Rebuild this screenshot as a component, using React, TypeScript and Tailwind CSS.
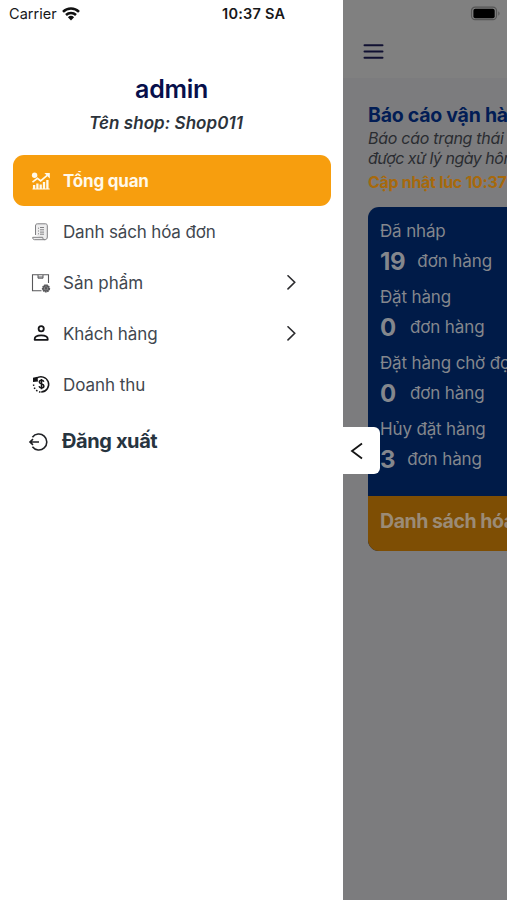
import React from "react";

function TrendIcon() {
  return (
    <svg width="20" height="18" viewBox="0 0 20 18" fill="none" stroke="currentColor">
      <circle cx="3.6" cy="3.2" r="2.7" fill="currentColor" stroke="none" />
      <path d="M1.5 10.2 6.4 6.4l3.2 2.4 6.6-5.5" strokeWidth="1.7" />
      <path d="M13.4 1h5.4v5.4z" fill="currentColor" stroke="none" />
      <path d="M3.1 17v-4M6.4 17v-5.5M9.7 17v-4.5M13 17v-7M16.4 17V8" strokeWidth="2.3" />
      <path d="M1.5 17h17.2" strokeWidth="1" />
    </svg>
  );
}

function InvoiceIcon() {
  return (
    <svg width="20" height="20" viewBox="0 0 20 20" fill="none" stroke="#808083" strokeWidth="1">
      <path d="M4.5 13V4c0-1.5.7-2.2 2-2.2h8c1.2 0 1.8.8 1.8 2V15c0 1.8-1 2.7-2.4 2.7H3.5c-1.3 0-1.8-1-1.8-2.4h10c0 1.5.7 2.4 2 2.4" fill="#ededee" />
      <path d="M7 6.2h1M7 9h1M7 11.8h1M9 5.5h4M9 7.8h4M9 10.1h4M9 12.2h4" />
    </svg>
  );
}

function ProductIcon() {
  return (
    <svg width="20" height="20" viewBox="0 0 20 20" fill="none" stroke="#57575a" strokeWidth="1.1">
      <path d="M17.5 10V1.7H1.5v16h9" />
      <path d="M7 2v3.2h5V2M7 4h5" strokeWidth="1" />
      <circle cx="15" cy="15.4" r="3.3" fill="#aaa" strokeWidth="1.7" strokeDasharray="1.7 .5" />
      <circle cx="15" cy="15.4" r="2.4" />
      <circle cx="15" cy="15.4" r=".8" fill="#444" />
    </svg>
  );
}

function PersonIcon() {
  return (
    <svg width="20" height="20" viewBox="0 0 20 20" fill="none" stroke="#151517" strokeWidth="1.8">
      <circle cx="10.2" cy="4.8" r="2.6" />
      <path d="M3.7 15.8V15c0-2.4 3-3.7 6.5-3.7s6.5 1.3 6.5 3.7v.8z" strokeLinejoin="round" />
    </svg>
  );
}

function RevenueIcon() {
  return (
    <svg width="20" height="20" viewBox="0 0 20 20" fill="none" stroke="#151517">
      <path d="M5.4 3.4A7.6 7.6 0 1 1 10.2 17" strokeWidth="1.5" />
      <path d="M2.6 9.5a7.5 7.5 0 0 0 7.2 7.5" strokeWidth="1.5" strokeDasharray="1.5 1.7" />
      <path d="M2 2.7 6.4 1.8 7 6.4 2 6.9z" fill="#151517" stroke="none" />
      <path d="M12.8 6.7c-.3-1-1.2-1.4-2.3-1.4-1.3 0-2.2.7-2.2 1.8 0 2.5 4.6 1.3 4.6 3.9 0 1.2-1 1.9-2.4 1.9-1.3 0-2.2-.6-2.5-1.6M10.5 3.9v10.4" strokeWidth="1.5" />
    </svg>
  );
}

function Chevron() {
  return (
    <svg className="mr-[35px] ml-auto" width="9" height="16" viewBox="0 0 9 16" fill="none" stroke="#2b2b2e" strokeWidth="1.6" strokeLinecap="round">
      <path d="m1 .8 6.7 6.5L1 13.9" />
    </svg>
  );
}

type MenuItem = {
  label: string;
  icon: React.ReactNode;
  type: string;
  arrow?: boolean;
  active?: boolean;
};

const menu: MenuItem[] = [
  { label: "Tổng quan", icon: <TrendIcon />, type: "font-bold text-[17px] tracking-[-0.2px]", active: true },
  { label: "Danh sách hóa đơn", icon: <InvoiceIcon />, type: "text-[17px] tracking-[-0.15px]" },
  { label: "Sản phẩm", icon: <ProductIcon />, type: "text-[17px] tracking-[0px]", arrow: true },
  { label: "Khách hàng", icon: <PersonIcon />, type: "text-[17px] tracking-[-0.12px]", arrow: true },
  { label: "Doanh thu", icon: <RevenueIcon />, type: "text-[17px] tracking-[-0.05px]" },
];

const stats = [
  { label: "Đã nháp", value: "19", gap: "ml-[12px]" },
  { label: "Đặt hàng", value: "0", gap: "ml-[14px]" },
  { label: "Đặt hàng chờ đợi", value: "0", gap: "ml-[14px]" },
  { label: "Hủy đặt hàng", value: "3", gap: "ml-[12px]" },
];

function Drawer() {
  return (
    <aside className="flex h-full w-[343px] shrink-0 flex-col bg-white">
      <div className="flex h-7 items-center pl-[9px] text-[#171719]">
        <span className="w-[47px] text-[14.5px] tracking-[0.05px]">Carrier</span>
        <svg className="ml-[6px]" width="18" height="14" viewBox="0 0 18 14" fill="none" stroke="#111" strokeWidth="2.5">
          <path d="M1 4.8a11.3 11.3 0 0 1 16 0M4 8a7.2 7.2 0 0 1 10 0" />
          <path d="M9 13.5 5.9 10.3a4.5 4.5 0 0 1 6.2 0z" fill="#111" stroke="none" />
        </svg>
        <span className="ml-[142px] text-[14.5px] font-semibold tracking-[0.25px] whitespace-nowrap">10:37 SA</span>
      </div>
      <div className="flex h-[127px] flex-col items-center pt-[44px]">
        <h1 className="text-[25px] leading-[34px] font-semibold tracking-[-0.3px] text-[#070f4b]">admin</h1>
        <p className="mt-[5px] mr-[11px] text-[17px] leading-[24px] font-semibold tracking-[0.05px] whitespace-nowrap text-[#2c333b] italic">Tên shop: Shop011</p>
      </div>
      <nav className="mr-3 ml-[13px]">
        {menu.map((item) => (
          <div
            key={item.label}
            className={`flex h-[51px] items-center rounded-[11px] pl-[18px] ${item.active ? "bg-[#f79e0e] text-[#fff9ea]" : "text-[#41474f]"}`}
          >
            <span className="flex w-8 shrink-0">{item.icon}</span>
            <span className={`pt-[2px] whitespace-nowrap ${item.type}`}>{item.label}</span>
            {item.arrow && <Chevron />}
          </div>
        ))}
      </nav>
      <div className="mt-[5px] flex h-[51px] items-center pl-[28px] text-[#27343f]">
        <svg className="mt-[2px]" width="21" height="20" viewBox="0 0 21 20" fill="none" stroke="#202226" strokeWidth="1.6">
          <path d="M4.4 5.2A8 8 0 1 1 4.4 14.8M11 10H2.2M5 7.2 2 10l3 2.8" />
        </svg>
        <span className="ml-[13px] text-[20px] font-bold tracking-[-0.4px]">Đăng xuất</span>
      </div>
    </aside>
  );
}

function Report() {
  return (
    <main className="flex h-full min-w-0 flex-1 flex-col overflow-hidden bg-[#7c7c7e]">
      <header className="h-[78px] shrink-0 bg-[#808080]">
        <div className="flex h-7 items-center justify-end pr-[6px]">
          <svg width="31" height="16" viewBox="0 0 31 16">
            <rect x="1.5" y="1.2" width="25" height="12.5" rx="3.6" fill="none" stroke="#555" strokeWidth="1.2" />
            <rect x="3.4" y="2.7" width="21.3" height="9.5" rx="2" fill="#000" />
            <path d="M28.3 5.3c1.7.9 1.7 3.5 0 4.4z" fill="#555" />
          </svg>
        </div>
        <svg className="mt-[15px] ml-[20px]" width="22" height="17" viewBox="0 0 22 17" stroke="#111132" strokeWidth="2" strokeLinecap="round">
          <path d="M1.5 2.3h18M1.5 8.5h18M1.5 14.7h18" />
        </svg>
      </header>
      <section className="ml-[25px] w-[260px] whitespace-nowrap">
        <h2 className="mt-[25px] text-[19.5px] leading-[25px] font-bold tracking-[-0.25px] text-[#021d55]">Báo cáo vận hành</h2>
        <p className="text-[16px] leading-5 tracking-[-0.3px] text-[#2a2c31] italic">
          Báo cáo trạng thái đơn hàng
          <br />
          <span className="tracking-[-0.5px]">được xử lý ngày hôm nay</span>
        </p>
        <p className="mt-[2px] text-[16px] leading-6 font-bold tracking-[-0.3px] text-[#a7690c]">Cập nhật lúc 10:37</p>
        <div className="mt-[13px] h-[344px] overflow-hidden rounded-[11px] bg-[#001b48] text-[#84878d]">
          <div className="h-[289px] pt-[11px] pl-[12px]">
            {stats.map((stat) => (
              <div key={stat.label} className="h-[66px]">
                <p className="text-[17px] leading-[27px] tracking-[-0.15px]">{stat.label}</p>
                <p className="flex h-[34px] items-center">
                  <span className="text-[24px] font-bold tracking-[-0.3px]">{stat.value}</span>
                  <span className={`text-[17px] tracking-[-0.1px] ${stat.gap}`}>đơn hàng</span>
                </p>
              </div>
            ))}
          </div>
          <div className="h-[55px] bg-[#7e4e04] pt-[10px] pl-[12px] text-[19.5px] leading-[30px] font-bold tracking-[-0.45px] text-[#9b8b76]">Danh sách hóa đơn</div>
        </div>
      </section>
    </main>
  );
}

export default function App() {
  return (
    <div className="relative flex h-[900px] w-[507px] overflow-hidden bg-white font-['Inter',sans-serif]">
      <Drawer />
      <Report />
      <button aria-label="Đóng menu" className="absolute top-[427px] left-[342px] flex h-[47px] w-[38px] items-center rounded-r-[6px] bg-white pl-[8px]">
        <svg width="14" height="18" viewBox="0 0 14 18" fill="none" stroke="#151515" strokeWidth="1.8">
          <path d="M12 1.5 2 9l10 7.5" />
        </svg>
      </button>
    </div>
  );
}
